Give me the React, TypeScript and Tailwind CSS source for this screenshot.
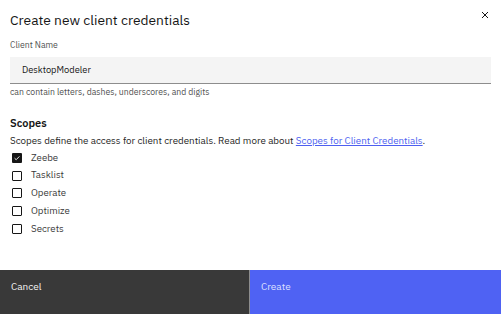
import React from "react";

const font = { fontFamily: '"IBM Plex Sans", "Noto Sans", "Open Sans", sans-serif' };

function Box({ checked }: { checked?: boolean }) {
  return checked ? (
    <span className="w-[10px] h-[10px] rounded-[1px] bg-[#161616] flex items-center justify-center">
      <svg width="8" height="8" viewBox="0 0 8 8" fill="none">
        <path d="M1.6 4.2 L3.2 5.7 L6.4 2.4" stroke="white" strokeWidth="0.9" />
      </svg>
    </span>
  ) : (
    <span className="w-[10px] h-[10px] rounded-[1px] border border-[#161616] bg-white" />
  );
}

export default function App() {
  const scopes = [
    { n: "Zeebe", c: true },
    { n: "Tasklist" },
    { n: "Operate" },
    { n: "Optimize" },
    { n: "Secrets" },
  ];
  return (
    <div className="w-[501px] h-[314px] bg-white flex flex-col text-[#161616]" style={font}>
      <div className="flex-1 relative px-[10px]">
        <button className="absolute right-[10px] top-[9px] w-[12px] h-[12px] flex items-center justify-center">
          <svg width="8" height="8" viewBox="0 0 8 8">
            <path d="M1 1 L7 7 M7 1 L1 7" stroke="#161616" strokeWidth="1" />
          </svg>
        </button>
        <h1 className="text-[13.8px] leading-[20px] pt-[10px] font-normal">Create new client credentials</h1>
        <div className="text-[8.7px] leading-[10px] text-[#525252] mt-[10px]">Client Name</div>
        <div className="mt-[7px] h-[27px] bg-[#f4f4f4] border-b border-[#8d8d8d] flex items-center px-[12px] text-[9.3px]">
          DesktopModeler
        </div>
        <div className="text-[8.7px] leading-[10px] text-[#525252] mt-[3px]">
          can contain letters, dashes, underscores, and digits
        </div>
        <div className="text-[11px] font-semibold leading-[14px] mt-[19px]">Scopes</div>
        <div className="text-[9.8px] leading-[12px] mt-[5px] text-[#262626]">
          Scopes define the access for client credentials. Read more about{" "}
          <span className="text-[#4d5ff0] underline">Scopes for Client Credentials</span>.
        </div>
        <div className="flex flex-col mt-[2px] pl-[2px]">
          {scopes.map((s) => (
            <div key={s.n} className="flex items-center h-[17.75px] gap-[9px]">
              <Box checked={s.c} />
              <span className="text-[9.7px] text-[#393939]">{s.n}</span>
            </div>
          ))}
        </div>
      </div>
      <div className="h-[44px] flex">
        <div className="w-[249px] bg-[#393939] text-[#f4f4f4] text-[10px] leading-[14px] px-[11px] pt-[10px]">Cancel</div>
        <div className="w-px bg-[#8d8d8d]" />
        <div className="flex-1 bg-[#4f62f3] text-[#dde0ff] text-[10px] leading-[14px] px-[11px] pt-[10px]">Create</div>
      </div>
    </div>
  );
}
